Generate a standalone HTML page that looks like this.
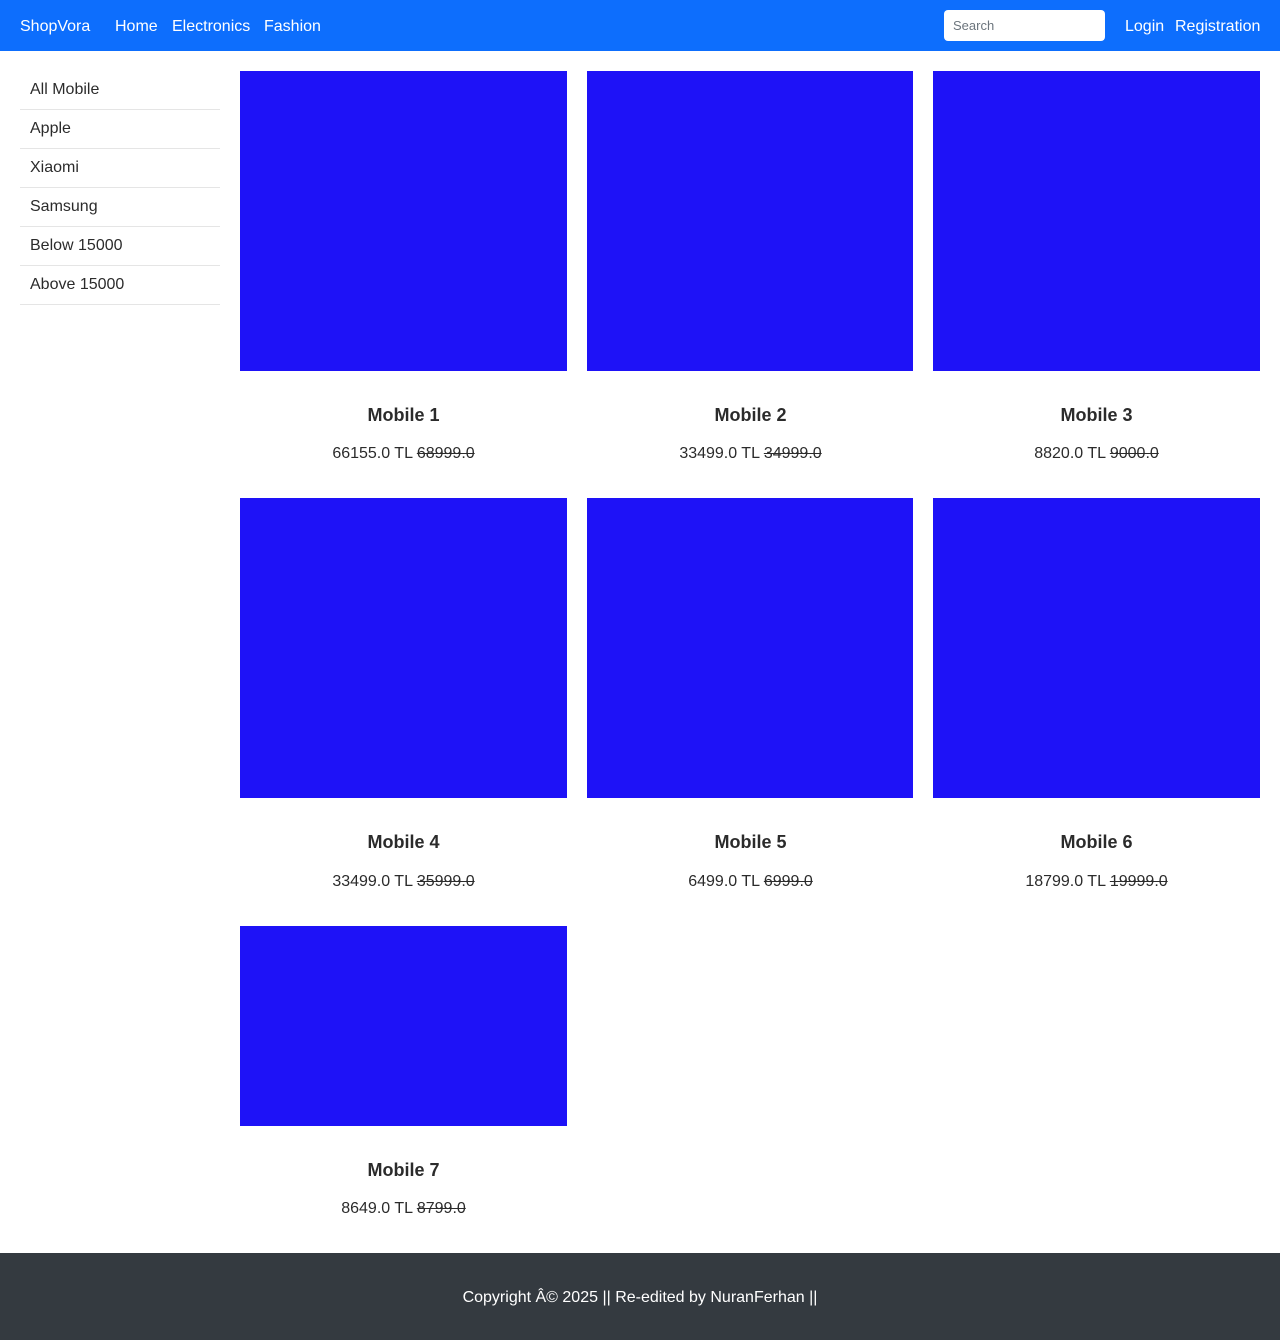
<!DOCTYPE html>
<html><head><style>
body{margin:0;width:1280px;height:1340px;position:relative;font-family:"Liberation Sans",Arial,sans-serif;color:#2b2b2b;background:#fff}
.nav{position:absolute;left:0;top:0;width:1280px;height:51px;background:#0d6efd;color:#fff;font-size:16px}
.nav span{position:absolute;top:17px;line-height:19px}
.search{position:absolute;left:944px;top:10px;width:161px;height:31px;background:#fff;border-radius:4px;color:#6c757d;font-size:13px;line-height:31px;padding-left:9px;box-sizing:border-box}
.side{position:absolute;left:20px;top:71px;width:200px}
.side div{height:38px;border-bottom:1px solid #e5e5e5;padding-left:10px;line-height:38px;font-size:16px}
.img{position:absolute;background:#1e12f7}
.t{position:absolute;text-align:center;font-weight:bold;font-size:18px;width:327px}
.p{position:absolute;text-align:center;font-size:16px;width:327px}
.foot{position:absolute;left:0;top:1253px;width:1280px;height:87px;background:#343a40;color:#fff;text-align:center;line-height:90px;font-size:16px}
</style></head><body>
<div class="nav">
<span style="left:20px">ShopVora</span><span style="left:115px">Home</span><span style="left:172px">Electronics</span><span style="left:264px">Fashion</span>
<div class="search">Search</div>
<span style="left:1125px">Login</span><span style="left:1175px">Registration</span>
</div>
<div class="side"><div>All Mobile</div><div>Apple</div><div>Xiaomi</div><div>Samsung</div><div>Below 15000</div><div>Above 15000</div></div>

<div class="img" style="left:240px;top:71px;width:327px;height:300px"></div>
<div class="img" style="left:587px;top:71px;width:326px;height:300px"></div>
<div class="img" style="left:933px;top:71px;width:327px;height:300px"></div>
<div class="t" style="left:240px;top:405px">Mobile 1</div>
<div class="t" style="left:587px;top:405px">Mobile 2</div>
<div class="t" style="left:933px;top:405px">Mobile 3</div>
<div class="p" style="left:240px;top:445px">66155.0 TL <s>68999.0</s></div>
<div class="p" style="left:587px;top:445px">33499.0 TL <s>34999.0</s></div>
<div class="p" style="left:933px;top:445px">8820.0 TL <s>9000.0</s></div>

<div class="img" style="left:240px;top:498px;width:327px;height:300px"></div>
<div class="img" style="left:587px;top:498px;width:326px;height:300px"></div>
<div class="img" style="left:933px;top:498px;width:327px;height:300px"></div>
<div class="t" style="left:240px;top:832px">Mobile 4</div>
<div class="t" style="left:587px;top:832px">Mobile 5</div>
<div class="t" style="left:933px;top:832px">Mobile 6</div>
<div class="p" style="left:240px;top:873px">33499.0 TL <s>35999.0</s></div>
<div class="p" style="left:587px;top:873px">6499.0 TL <s>6999.0</s></div>
<div class="p" style="left:933px;top:873px">18799.0 TL <s>19999.0</s></div>

<div class="img" style="left:240px;top:926px;width:327px;height:200px"></div>
<div class="t" style="left:240px;top:1160px">Mobile 7</div>
<div class="p" style="left:240px;top:1200px">8649.0 TL <s>8799.0</s></div>

<div class="foot">Copyright Â© 2025 || Re-edited by NuranFerhan ||</div>
</body></html>
